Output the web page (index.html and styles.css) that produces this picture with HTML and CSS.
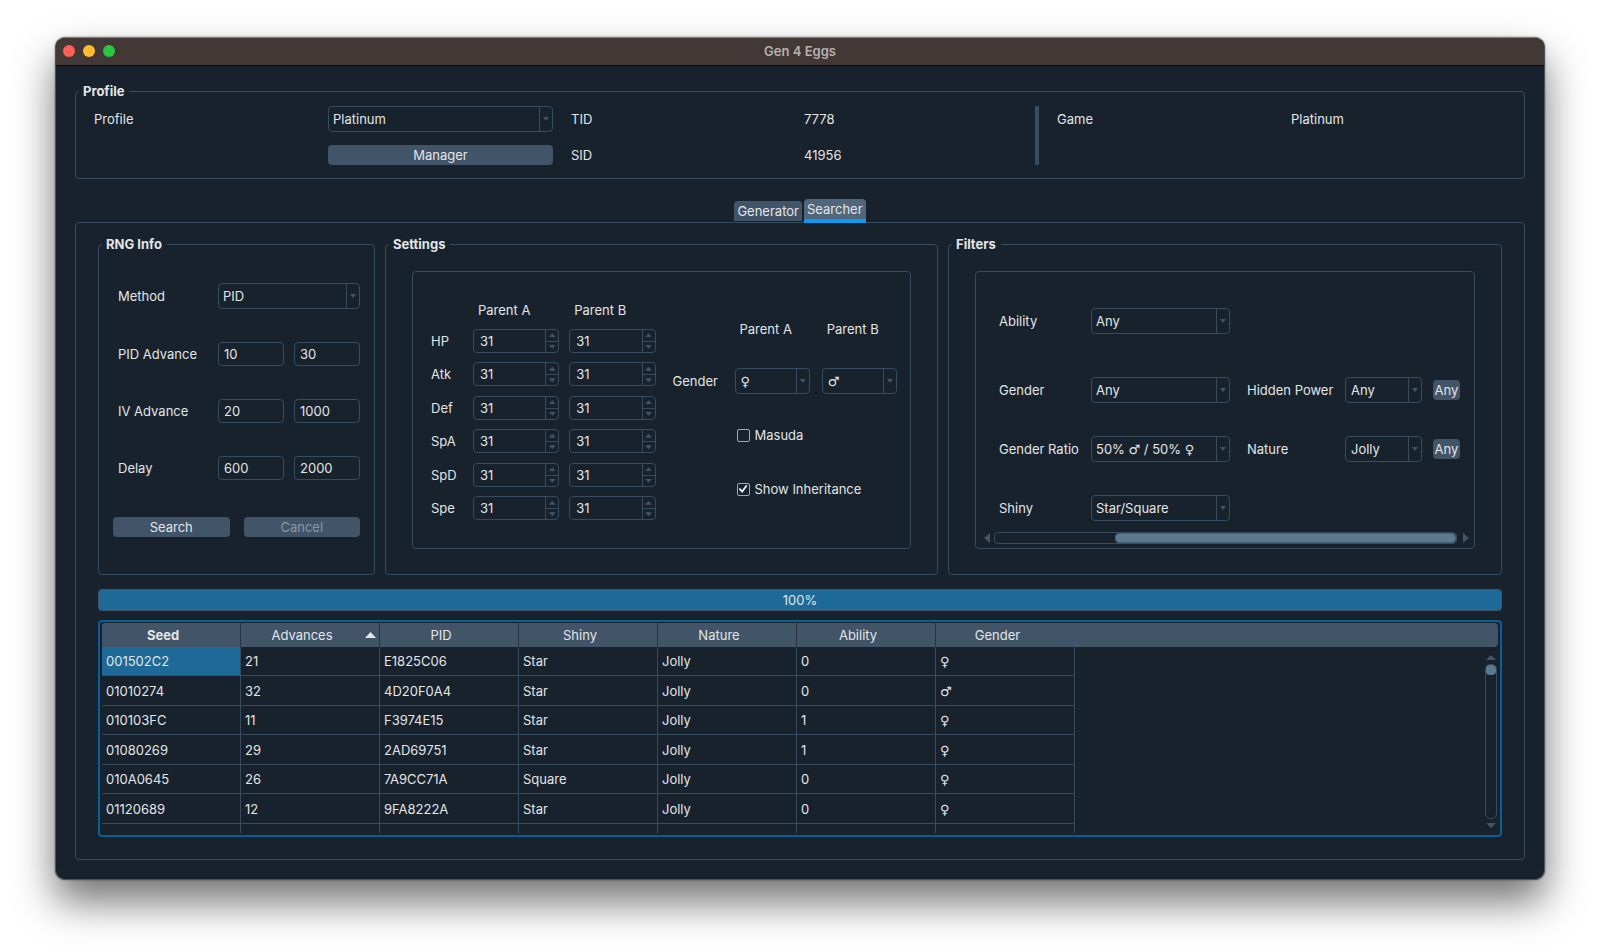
FILE: index.html
```html
<!DOCTYPE html>
<html lang="en">
<head>
<meta charset="utf-8">
<title>Gen 4 Eggs</title>
<link rel="stylesheet" href="styles.css">
</head>
<body>
<main class="window">
  <header class="titlebar">
    <div class="lights">
      <button class="light close" aria-label="Close"></button>
      <button class="light minimize" aria-label="Minimize"></button>
      <button class="light maximize" aria-label="Zoom"></button>
    </div>
    <h1 class="title">Gen 4 Eggs</h1>
  </header>

  <div class="content">
    <fieldset class="group">
      <legend>Profile</legend>
      <div class="profile">
        <label class="cell-label" for="profile">Profile</label>
        <span class="combo"><select id="profile"><option>Platinum</option></select></span>
        <span class="cell-label">TID</span>
        <span class="cell-label">7778</span>
        <span class="divider"></span>
        <span class="cell-label">Game</span>
        <span class="cell-label">Platinum</span>
        <button class="button manager">Manager</button>
        <span class="cell-label">SID</span>
        <span class="cell-label">41956</span>
      </div>
    </fieldset>

    <div class="tabs" role="tablist">
      <button class="tab" role="tab" aria-selected="false">Generator</button>
      <button class="tab active" role="tab" aria-selected="true">Searcher</button>
    </div>

    <section class="pane" role="tabpanel">
      <div class="groups">
        <fieldset class="group">
          <legend>RNG Info</legend>
          <div class="rng">
            <div class="rng-grid">
              <label for="method">Method</label>
              <span class="combo wide"><select id="method"><option>PID</option></select></span>
              <label for="pid-min">PID Advance</label>
              <input class="field" id="pid-min" type="text" value="10">
              <input class="field" type="text" value="30" aria-label="PID Advance maximum">
              <label for="iv-min">IV Advance</label>
              <input class="field" id="iv-min" type="text" value="20">
              <input class="field" type="text" value="1000" aria-label="IV Advance maximum">
              <label for="delay-min">Delay</label>
              <input class="field" id="delay-min" type="text" value="600">
              <input class="field" type="text" value="2000" aria-label="Delay maximum">
            </div>
            <div class="actions">
              <button class="button">Search</button>
              <button class="button" disabled>Cancel</button>
            </div>
          </div>
        </fieldset>

        <fieldset class="group">
          <legend>Settings</legend>
          <div class="frame settings">
            <div class="stats">
              <span class="stats-head first">Parent A</span>
              <span class="stats-head">Parent B</span>
              <label for="hp-a">HP</label>
              <span class="spin"><input id="hp-a" type="number" value="31"><button class="up" aria-label="Increase"></button><button class="down" aria-label="Decrease"></button></span>
              <span class="spin"><input type="number" value="31" aria-label="HP, Parent B"><button class="up" aria-label="Increase"></button><button class="down" aria-label="Decrease"></button></span>
              <label for="atk-a">Atk</label>
              <span class="spin"><input id="atk-a" type="number" value="31"><button class="up" aria-label="Increase"></button><button class="down" aria-label="Decrease"></button></span>
              <span class="spin"><input type="number" value="31" aria-label="Atk, Parent B"><button class="up" aria-label="Increase"></button><button class="down" aria-label="Decrease"></button></span>
              <label for="def-a">Def</label>
              <span class="spin"><input id="def-a" type="number" value="31"><button class="up" aria-label="Increase"></button><button class="down" aria-label="Decrease"></button></span>
              <span class="spin"><input type="number" value="31" aria-label="Def, Parent B"><button class="up" aria-label="Increase"></button><button class="down" aria-label="Decrease"></button></span>
              <label for="spa-a">SpA</label>
              <span class="spin"><input id="spa-a" type="number" value="31"><button class="up" aria-label="Increase"></button><button class="down" aria-label="Decrease"></button></span>
              <span class="spin"><input type="number" value="31" aria-label="SpA, Parent B"><button class="up" aria-label="Increase"></button><button class="down" aria-label="Decrease"></button></span>
              <label for="spd-a">SpD</label>
              <span class="spin"><input id="spd-a" type="number" value="31"><button class="up" aria-label="Increase"></button><button class="down" aria-label="Decrease"></button></span>
              <span class="spin"><input type="number" value="31" aria-label="SpD, Parent B"><button class="up" aria-label="Increase"></button><button class="down" aria-label="Decrease"></button></span>
              <label for="spe-a">Spe</label>
              <span class="spin"><input id="spe-a" type="number" value="31"><button class="up" aria-label="Increase"></button><button class="down" aria-label="Decrease"></button></span>
              <span class="spin"><input type="number" value="31" aria-label="Spe, Parent B"><button class="up" aria-label="Increase"></button><button class="down" aria-label="Decrease"></button></span>
            </div>
            <div class="parents">
              <span class="parents-head first">Parent A</span>
              <span class="parents-head">Parent B</span>
              <label for="gender-a">Gender</label>
              <span class="combo roomy"><select id="gender-a"><option>♀</option></select></span>
              <span class="combo roomy"><select aria-label="Gender, Parent B"><option>♂</option></select></span>
              <label class="check"><input type="checkbox">Masuda</label>
              <label class="check"><input type="checkbox" checked>Show Inheritance</label>
            </div>
          </div>
        </fieldset>

        <fieldset class="group">
          <legend>Filters</legend>
          <div class="frame filters">
            <div class="filter-grid">
              <label class="lead" for="ability">Ability</label>
              <span class="combo"><select id="ability"><option>Any</option></select></span>
              <label class="lead" for="gender">Gender</label>
              <span class="combo"><select id="gender"><option>Any</option></select></span>
              <label class="second" for="hidden-power">Hidden Power</label>
              <span class="combo roomy"><select id="hidden-power"><option>Any</option></select></span>
              <button class="button small">Any</button>
              <label class="lead" for="ratio">Gender Ratio</label>
              <span class="combo"><select id="ratio"><option>50% ♂ / 50% ♀</option></select></span>
              <label class="second" for="nature">Nature</label>
              <span class="combo roomy"><select id="nature"><option>Jolly</option></select></span>
              <button class="button small">Any</button>
              <label class="lead" for="shiny">Shiny</label>
              <span class="combo"><select id="shiny"><option>Star/Square</option></select></span>
            </div>
            <div class="hscroll">
              <span class="arrow left"></span>
              <span class="htrack"><span class="hthumb"></span></span>
              <span class="arrow right"></span>
            </div>
          </div>
        </fieldset>
      </div>

      <div class="progress" role="progressbar" aria-valuenow="100" aria-valuemin="0" aria-valuemax="100">100%</div>

      <div class="results">
        <div class="viewport">
          <table>
            <colgroup><col class="data" span="7"><col></colgroup>
            <thead>
              <tr><th class="current">Seed</th><th class="sorted">Advances</th><th>PID</th><th>Shiny</th><th>Nature</th><th>Ability</th><th>Gender</th><td></td></tr>
            </thead>
            <tbody>
              <tr><td class="selected">001502C2</td><td>21</td><td>E1825C06</td><td>Star</td><td>Jolly</td><td>0</td><td>♀</td></tr>
              <tr><td>01010274</td><td>32</td><td>4D20F0A4</td><td>Star</td><td>Jolly</td><td>0</td><td>♂</td></tr>
              <tr><td>010103FC</td><td>11</td><td>F3974E15</td><td>Star</td><td>Jolly</td><td>1</td><td>♀</td></tr>
              <tr><td>01080269</td><td>29</td><td>2AD69751</td><td>Star</td><td>Jolly</td><td>1</td><td>♀</td></tr>
              <tr><td>010A0645</td><td>26</td><td>7A9CC71A</td><td>Square</td><td>Jolly</td><td>0</td><td>♀</td></tr>
              <tr><td>01120689</td><td>12</td><td>9FA8222A</td><td>Star</td><td>Jolly</td><td>0</td><td>♀</td></tr>
              <tr><td>01150604</td><td>24</td><td>8C30864A</td><td>Star</td><td>Jolly</td><td>0</td><td>♀</td></tr>
            </tbody>
          </table>
        </div>
        <div class="vscroll">
          <span class="arrow top"></span>
          <span class="vtrack"><span class="vthumb"></span></span>
          <span class="arrow bottom"></span>
        </div>
      </div>
    </section>
  </div>
</main>
</body>
</html>
```

FILE: styles.css
```css
:root {
  --bg: #17222d;
  --line: #384c60;
  --raised: #425468;
  --text: #e3e5e6;
  --accent: #1d6997;
  --focus: #0a5e9a;
  --thumb: #5b7a8d;
}

* { box-sizing: border-box; }

body {
  margin: 0;
  height: 100vh;
  min-height: 900px;
  padding: 37px 55px 72px;
  background: #fff;
  color: var(--text);
  font: 13px/16px Inter, "DejaVu Sans", sans-serif;
}

button, input, select {
  font: inherit;
  color: inherit;
  margin: 0;
}

.window {
  display: flex;
  flex-direction: column;
  height: 100%;
  background: var(--bg);
  border: 1px solid #4c5359;
  border-top-color: #847e7d;
  border-radius: 10px;
  box-shadow: 0 22px 40px rgba(0, 0, 0, .55), 0 0 2px rgba(0, 0, 0, .5);
  overflow: hidden;
}

/* Title bar */
.titlebar {
  display: grid;
  grid-template-columns: 1fr auto 1fr;
  align-items: center;
  height: 28px;
  padding: 0 7px 2px;
  background: #423836;
  border-bottom: 1px solid #05090d;
}

.lights { display: flex; gap: 8px; }

.light {
  width: 12px;
  height: 12px;
  padding: 0;
  border: 0;
  border-radius: 50%;
}
.close { background: #ff5f57; }
.minimize { background: #febc2e; }
.maximize { background: #28c840; }

.title {
  margin: 0;
  font-size: 13px;
  font-weight: 600;
  color: #b8b0ae;
}

.content {
  flex: 1;
  min-height: 0;
  display: flex;
  flex-direction: column;
  padding: 17px 19px 19px;
}

/* Group boxes */
.group {
  display: flex;
  flex-direction: column;
  min-width: 0;
  margin: 0;
  padding: 0;
  border: 1px solid var(--line);
  border-radius: 4px;
}

.group legend {
  margin-left: 3px;
  padding: 0 5px 0 4px;
  font-weight: 700;
}

.profile {
  display: grid;
  grid-template-columns: 234fr 225fr 224fr 231fr 4px 225fr 233fr;
  grid-template-rows: 26px 20px;
  gap: 13px 9px;
  align-items: center;
  padding: 7px 9px 13px;
}
.cell-label { padding-left: 9px; }
.divider {
  grid-column: 5;
  grid-row: 1 / span 2;
  align-self: stretch;
  background: var(--line);
}
.manager { grid-column: 2; }

/* Controls */
.button {
  height: 20px;
  padding: 0;
  border: 0;
  border-radius: 4px;
  background: var(--raised);
}
.button:disabled { color: #8b98a5; }

.field {
  width: 100%;
  min-width: 0;
  height: 24px;
  padding: 0 5px;
  background: transparent;
  border: 1px solid var(--line);
  border-radius: 4px;
}

.combo {
  position: relative;
  display: block;
  min-width: 0;
}
.combo select {
  appearance: none;
  display: block;
  width: 100%;
  height: 26px;
  padding: 0 16px 0 4px;
  background: transparent;
  border: 1px solid var(--line);
  border-radius: 4px;
}
.combo.roomy select { padding-left: 5px; }
.combo::before {
  content: "";
  position: absolute;
  top: 0;
  bottom: 0;
  right: 13px;
  width: 1px;
  background: var(--line);
}
.combo::after {
  content: "";
  position: absolute;
  top: 11px;
  right: 4px;
  width: 6px;
  height: 4px;
  background: var(--raised);
  clip-path: polygon(0 0, 100% 0, 50% 100%);
}

.spin {
  display: grid;
  grid-template-columns: 1fr 13px;
  grid-template-rows: 1fr 1fr;
  align-self: center;
  height: 24px;
  min-width: 0;
  border: 1px solid var(--line);
  border-radius: 4px;
}
.spin input {
  appearance: textfield;
  grid-row: 1 / span 2;
  width: 100%;
  min-width: 0;
  padding: 0 6px;
  border: 0;
  background: transparent;
}
.spin input::-webkit-inner-spin-button { appearance: none; }
.spin button {
  display: grid;
  place-items: center;
  padding: 0;
  background: transparent;
  border: 0;
  border-left: 1px solid var(--line);
}
.spin .down { border-top: 1px solid var(--line); }
.spin button::before {
  content: "";
  width: 7px;
  height: 4px;
  background: var(--raised);
  clip-path: polygon(50% 0, 100% 100%, 0 100%);
}
.spin .down::before { clip-path: polygon(0 0, 100% 0, 50% 100%); }

.check {
  display: flex;
  align-items: center;
  gap: 5px;
  grid-column: 2 / -1;
  padding-left: 2px;
}
.check input {
  appearance: none;
  display: grid;
  place-items: center;
  width: 13px;
  height: 13px;
  border: 1px solid #9da9b5;
  border-radius: 2px;
}
.check input:checked::before {
  content: "";
  width: 9px;
  height: 8px;
  background: #f2f4f5;
  clip-path: polygon(0 50%, 18% 38%, 40% 66%, 82% 0, 100% 10%, 42% 100%);
}

/* Tabs */
.tabs {
  display: flex;
  justify-content: center;
  align-items: flex-end;
  gap: 2px;
  margin: 20px 0 -1px;
}
.tab {
  height: 20px;
  margin-bottom: 2px;
  padding: 0 3px;
  border: 0;
  border-radius: 4px 4px 0 0;
  background: var(--raised);
}
.tab.active {
  height: 24px;
  margin-bottom: 0;
  background: #50677b;
  border-bottom: 4px solid #0d9af0;
  z-index: 1;
}

.pane {
  flex: 1;
  min-height: 0;
  display: flex;
  flex-direction: column;
  padding: 13px 22px 22px;
  border: 1px solid var(--line);
  border-radius: 4px;
}

.groups {
  display: grid;
  grid-template-columns: 277fr 553fr 554fr;
  gap: 10px;
}

/* RNG info */
.rng { padding: 31px 14px 37px; }
.rng-grid {
  display: grid;
  grid-template-columns: 90px 1fr 1fr;
  gap: 33px 10px;
  align-items: center;
  padding-left: 5px;
}
.wide { grid-column: 2 / span 2; }
.actions {
  display: grid;
  grid-template-columns: 1fr 1fr;
  gap: 14px;
  margin-top: 37px;
}

.frame {
  flex: 1;
  margin: 19px 26px 25px;
  border: 1px solid var(--line);
  border-radius: 4px;
}

/* Settings */
.settings {
  display: grid;
  grid-template-columns: 1fr 1fr;
  gap: 17px;
  padding: 0 13px 0 18px;
}
.stats {
  display: grid;
  grid-template-columns: 32px 1fr 1fr;
  grid-template-rows: 23px repeat(6, 1fr);
  column-gap: 10px;
  align-items: center;
  padding: 29px 0 23px;
}
.stats-head { align-self: start; padding: 1px 0 0 5px; }
.stats-head.first, .parents-head.first { grid-column: 2; }
.parents {
  display: grid;
  grid-template-columns: 50px 1fr 1fr;
  grid-template-rows: 52px 52px 56px 52px;
  column-gap: 12px;
  align-items: center;
  padding-top: 31px;
}
.parents-head { padding-left: 5px; }

/* Filters */
.filters {
  display: flex;
  flex-direction: column;
  justify-content: space-between;
}
.filter-grid {
  display: grid;
  grid-template-columns: 81px 139fr 93px 77fr 27px;
  grid-template-rows: 36px 26px 26px 26px;
  gap: 33px 11px;
  align-items: start;
  padding: 36px 14px 11px 23px;
}
.filter-grid label { line-height: 26px; white-space: nowrap; }
.lead { grid-column: 1; }
.second { padding-left: 6px; }
.small { align-self: center; }

.arrow { background: var(--raised); }
.left, .right { width: 6px; height: 10px; }
.left { clip-path: polygon(100% 0, 100% 100%, 0 50%); }
.right { clip-path: polygon(0 0, 100% 50%, 0 100%); }
.top, .bottom { width: 10px; height: 5px; }
.top { clip-path: polygon(50% 0, 100% 100%, 0 100%); }
.bottom { clip-path: polygon(0 0, 100% 0, 50% 100%); }

.hscroll {
  display: flex;
  align-items: center;
  gap: 4px;
  padding: 0 5px 4px 8px;
}
.htrack {
  flex: 1;
  display: flex;
  justify-content: flex-end;
  height: 12px;
  margin-right: 2px;
  border: 1px solid var(--line);
  border-radius: 4px;
}
.hthumb {
  width: 74%;
  background: var(--thumb);
  border: 1px solid #466075;
  border-radius: 4px;
}

/* Progress and results */
.progress {
  height: 22px;
  margin: 14px 0 9px;
  border: 1px solid #40566a;
  border-radius: 4px;
  background: var(--accent);
  text-align: center;
  line-height: 20px;
}

.results {
  position: relative;
  flex: 1;
  min-height: 0;
  display: flex;
  padding: 1px 2px 2px;
  border: 2px solid var(--focus);
  border-radius: 4px;
}
.viewport {
  flex: 1;
  overflow: hidden;
}

table {
  width: 100%;
  table-layout: fixed;
  border-collapse: separate;
  border-spacing: 0;
}
.data { width: 139px; }

thead th {
  position: relative;
  height: 24px;
  padding: 0;
  padding-right: 16px;
  background: var(--raised);
  border-right: 1px solid #26323e;
  font-weight: 400;
}
thead th:first-child { border-top-left-radius: 3px; }
thead th:nth-child(7) { border-right: 0; }
thead td { background: var(--raised); border-radius: 0 4px 4px 0; }
thead .current { font-weight: 700; }
.sorted::after {
  content: "";
  position: absolute;
  top: 9px;
  right: 3px;
  width: 11px;
  height: 6px;
  background: var(--text);
  clip-path: polygon(50% 0, 100% 100%, 0 100%);
}

tbody td {
  height: 29px;
  padding: 0 4px;
  border-right: 1px solid var(--line);
  border-bottom: 1px solid var(--line);
}
tbody tr:nth-child(even) td { height: 30px; }
tbody tr:last-child td { height: 32px; }
tbody .selected { background: var(--accent); }

.vscroll {
  position: absolute;
  top: 33px;
  right: 3px;
  bottom: 7px;
  display: flex;
  flex-direction: column;
  align-items: center;
  gap: 4px;
}
.vtrack {
  flex: 1;
  width: 12px;
  border: 1px solid var(--line);
  border-radius: 5px;
}
.vthumb {
  display: block;
  height: 10px;
  background: var(--thumb);
  border-radius: 4px;
}
```
